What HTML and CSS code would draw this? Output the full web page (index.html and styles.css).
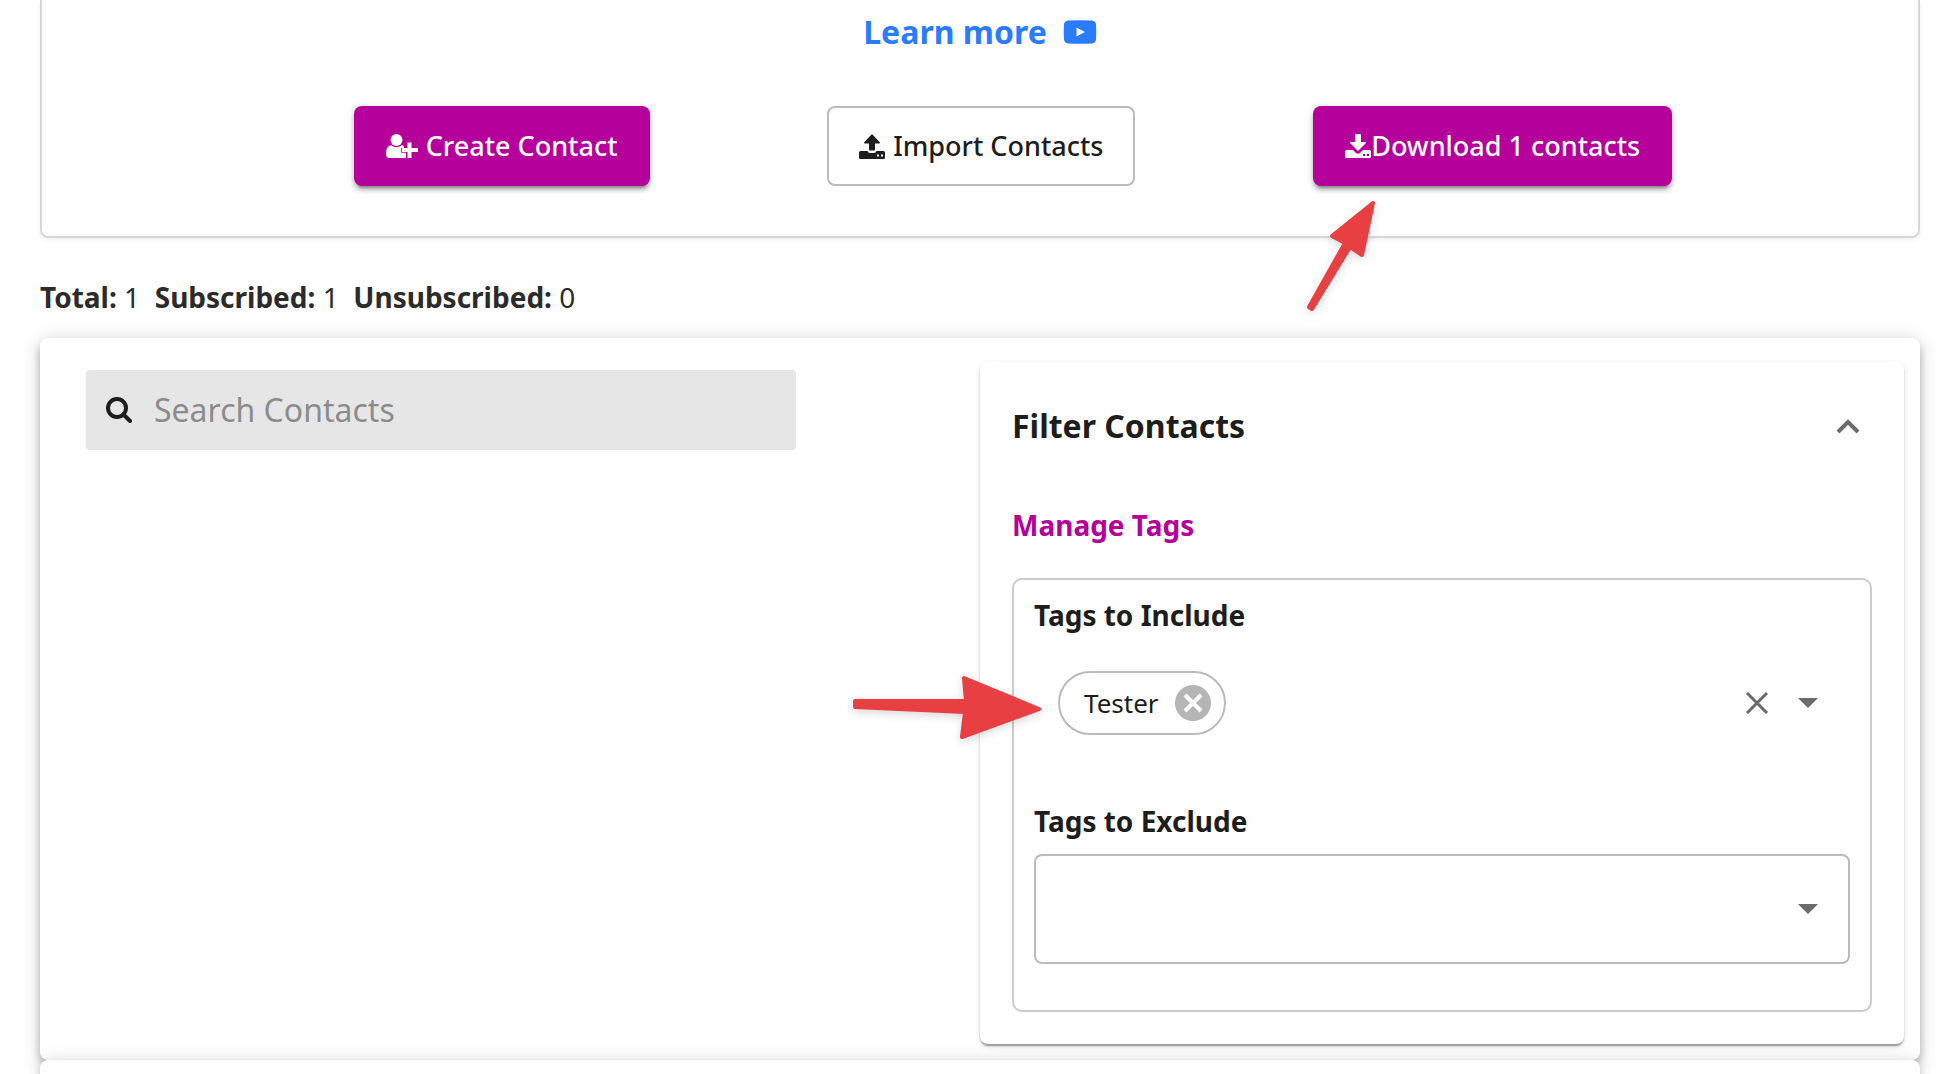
FILE: index.html
```html
<!DOCTYPE html>
<html lang="en">
<head>
    <meta charset="UTF-8">
    <meta name="viewport" content="width=device-width, initial-scale=1.0">
    <title>Contacts</title>
    <link rel="stylesheet" href="styles.css">
</head>
<body>

<section class="intro">
    <a class="learn-more" href="#">
        Learn more
        <svg class="icon-video" viewBox="0 0 34 24" aria-hidden="true">
            <path fill="currentColor" fill-rule="evenodd" d="M5 .6Q17 0 29 .6Q32.600 1 33 4.500Q33.600 12 33 19.500Q32.600 23 29 23.400Q17 24 5 23.400Q1.400 23 1 19.500Q.4 12 1 4.500Q1.400 1 5 .6ZM13.500 7.500V16.500L22 12Z"/>
        </svg>
    </a>
    <div class="actions">
        <button class="btn btn-primary" type="button">
            <svg class="icon-user" viewBox="0 0 32 24" aria-hidden="true">
                <ellipse cx="10.500" cy="6" rx="6" ry="6" fill="currentColor"/>
                <path fill="currentColor" d="M5.200 11.200Q10.500 15.400 15.800 11.200Q17 11.300 18 12.300V14H15.200V18.800H20V23.500Q19.500 24 18 24H3.500Q0 24 0 20Q0 11.500 5.200 11.200Z"/>
                <path fill="currentColor" d="M21.500 8.500H25.500V14H32V18H25.500V24H21.500V18H16V14H21.500Z"/>
            </svg>
            Create Contact
        </button>
        <button class="btn btn-outline" type="button">
            <svg class="icon-tray" viewBox="0 0 26 25" aria-hidden="true">
                <path fill="currentColor" d="M13 0L21 8.500Q21.300 9.500 20 9.500H16V15.500Q16 16.500 15 16.500H11Q10 16.500 10 15.500V9.500H6Q4.700 9.500 5 8.500Z"/>
                <path fill="currentColor" fill-rule="evenodd" d="M1.500 17H8.500Q9 19 11 19H15Q17 19 17.500 17H24.500Q26 17 26 18.500V23.500Q26 25 24.500 25H1.500Q0 25 0 23.500V18.500Q0 17 1.500 17ZM18 20.500V22.500H20V20.500ZM22 20.500V22.500H24V20.500Z"/>
            </svg>
            Import Contacts
        </button>
        <div class="download">
            <button class="btn btn-primary btn-tight" type="button">
                <svg class="icon-tray" viewBox="0 0 26 25" aria-hidden="true">
                    <path fill="currentColor" d="M11 0H15Q16 0 16 1V8H20Q21.300 8 21 9L13 17L5 9Q4.700 8 6 8H10V1Q10 0 11 0Z"/>
                    <path fill="currentColor" fill-rule="evenodd" d="M1.500 16H8L11 19Q13 20.500 15 19L18 16H24.500Q26 16 26 17.500V22.500Q26 24 24.500 24H1.500Q0 24 0 22.500V17.500Q0 16 1.500 16ZM18 20V22H20V20ZM22 20V22H24V20Z"/>
                </svg>
                Download 1 contacts
            </button>
            <svg class="pointer pointer-up" viewBox="0 0 80 120" aria-hidden="true">
                <path d="M72 4L31 37L44 44L8 108L11 110L49 48L61 56Z"/>
            </svg>
        </div>
    </div>
</section>

<p class="totals"><b>Total:</b> 1&nbsp; <b>Subscribed:</b> 1&nbsp; <b>Unsubscribed:</b> 0</p>

<section class="panel contacts">
    <div class="search-col">
        <div class="search">
            <svg class="icon-search" viewBox="0 0 26 26" aria-hidden="true">
                <circle cx="11" cy="11" r="9" fill="none" stroke="currentColor" stroke-width="4"/>
                <path d="M17.500 17.500L24 24" stroke="currentColor" stroke-width="4" stroke-linecap="round"/>
            </svg>
            <input type="text" placeholder="Search Contacts" aria-label="Search Contacts">
        </div>
    </div>

    <div class="filter">
        <button class="filter-head" type="button" aria-expanded="true">
            Filter Contacts
            <svg class="icon-chevron" viewBox="0 0 24 16" aria-hidden="true">
                <path d="M2 14L12 4L22 14" fill="none" stroke="currentColor" stroke-width="4"/>
            </svg>
        </button>
        <div class="filter-body">
            <a class="manage" href="#">Manage Tags</a>
            <div class="tags">
                <label for="include">Tags to Include</label>
                <div class="field">
                    <div class="chip">
                        Tester
                        <button class="chip-remove" type="button" aria-label="Remove Tester">
                            <svg viewBox="0 0 36 36" aria-hidden="true">
                                <circle cx="18" cy="18" r="18" fill="#b5b5b5"/>
                                <path d="M10 10L26 26M26 10L10 26" stroke="#fff" stroke-width="4"/>
                            </svg>
                        </button>
                        <svg class="pointer pointer-right" viewBox="0 0 200 80" aria-hidden="true">
                            <path d="M8 33L119 33L117 10L192 41L115 69L118 44L8 39Z"/>
                        </svg>
                    </div>
                    <input id="include" type="text">
                    <button class="icon-btn" type="button" aria-label="Clear">
                        <svg class="icon-clear" viewBox="0 0 22 22" aria-hidden="true">
                            <path d="M1 1L21 21M21 1L1 21" stroke="currentColor" stroke-width="3"/>
                        </svg>
                    </button>
                    <button class="icon-btn" type="button" aria-label="Open">
                        <svg class="icon-caret" viewBox="0 0 20 10" aria-hidden="true">
                            <path d="M0 0H20L10 10Z" fill="currentColor"/>
                        </svg>
                    </button>
                </div>
                <label for="exclude">Tags to Exclude</label>
                <div class="field field-outlined">
                    <select id="exclude">
                        <option></option>
                    </select>
                    <svg class="icon-caret" viewBox="0 0 20 10" aria-hidden="true">
                        <path d="M0 0H20L10 10Z" fill="currentColor"/>
                    </svg>
                </div>
            </div>
        </div>
    </div>
</section>

<section class="panel next"></section>

</body>
</html>
```

FILE: styles.css
```css
* {
    box-sizing: border-box;
}

body {
    margin: 0;
    padding: 0 34px 0 40px;
    min-height: 100vh;
    display: flex;
    flex-direction: column;
    background: #fff;
    color: #1d1d1d;
    font-family: "Noto Sans", "Open Sans", sans-serif;
    font-size: 28px;
    line-height: 38px;
}

button,
input,
select {
    font: inherit;
    color: inherit;
    background: none;
    border: 0;
    padding: 0;
    margin: 0;
}

a {
    text-decoration: none;
}

svg {
    display: block;
    flex: none;
}

/* Top card */
.intro {
    display: flex;
    flex-direction: column;
    padding: 10px 68px 50px 134px;
    border: 2px solid #d7d7d7;
    border-top: 0;
    border-radius: 0 0 8px 8px;
    box-shadow: 0 2px 4px rgba(0, 0, 0, 0.06);
}

.learn-more {
    display: flex;
    align-items: center;
    align-self: center;
    gap: 16px;
    margin: 0 66px 52px 0;
    color: #2b7bff;
    font-size: 32px;
    font-weight: 700;
    line-height: 44px;
}

.icon-video {
    width: 34px;
    height: 24px;
}

.actions {
    display: flex;
    justify-content: space-evenly;
}

.btn {
    display: flex;
    align-items: center;
    gap: 8px;
    height: 80px;
    padding: 0 32px;
    border-radius: 8px;
    font-size: 27px;
    font-weight: 500;
}

.btn-primary {
    background: #b6009b;
    color: #fff;
    box-shadow: 0 6px 2px -4px rgba(0, 0, 0, 0.2), 0 4px 4px rgba(0, 0, 0, 0.24), 0 2px 10px rgba(0, 0, 0, 0.12);
}

.btn-outline {
    padding: 0 30px;
    border: 2px solid #bbb;
}

.btn-tight {
    gap: 0;
}

.icon-user {
    width: 32px;
    height: 24px;
}

.icon-tray {
    width: 26px;
    height: 25px;
}

.download {
    position: relative;
}

/* Red pointers drawn over the page */
.pointer {
    position: absolute;
    fill: #e73f42;
    stroke: #e73f42;
    stroke-width: 4px;
    stroke-linejoin: round;
    filter: drop-shadow(0 3px 4px rgba(0, 0, 0, 0.15));
    pointer-events: none;
}

.pointer-up {
    top: 93px;
    left: -12px;
    width: 80px;
    height: 120px;
}

.pointer-right {
    top: -5px;
    right: 177px;
    width: 200px;
    height: 80px;
}

.totals {
    margin: 40px 0 22px;
    color: #2b2b2b;
}

/* Contacts panel */
.panel {
    border-radius: 8px;
    background: #fff;
    box-shadow: 0 4px 8px -2px rgba(0, 0, 0, 0.2), 0 8px 10px rgba(0, 0, 0, 0.14), 0 2px 20px rgba(0, 0, 0, 0.16);
}

.contacts {
    display: grid;
    grid-template-columns: 1fr 1fr;
    padding: 24px 0 16px;
}

.next {
    flex: 1;
    border-radius: 8px 8px 0 0;
}

.search-col {
    padding: 8px 184px 0 46px;
}

.search {
    display: flex;
    align-items: center;
    gap: 22px;
    height: 80px;
    padding: 0 20px;
    border-radius: 4px;
    background: #e6e6e6;
}

.search input {
    flex: 1;
    min-width: 0;
    font-size: 32px;
    line-height: 44px;
}

.search input::placeholder {
    color: #8c8c8c;
    opacity: 1;
}

.icon-search {
    width: 26px;
    height: 26px;
}

.filter {
    margin-right: 16px;
    border-radius: 8px;
    box-shadow: 0 4px 2px -2px rgba(0, 0, 0, 0.2), 0 2px 2px rgba(0, 0, 0, 0.2), 0 2px 6px rgba(0, 0, 0, 0.12);
}

.filter-head {
    display: flex;
    align-items: center;
    justify-content: space-between;
    width: 100%;
    height: 128px;
    padding: 0 44px 0 32px;
    font-size: 32px;
    font-weight: 700;
    line-height: 44px;
}

.icon-chevron {
    width: 24px;
    height: 16px;
    color: #6b6b6b;
}

.filter-body {
    padding: 16px 32px 32px;
}

.manage {
    display: block;
    margin-bottom: 34px;
    color: #b6009b;
    font-weight: 700;
}

.tags {
    padding: 16px 20px 46px;
    border: 2px solid #ccc;
    border-radius: 10px;
}

.tags label {
    display: block;
    margin-bottom: 14px;
    font-weight: 700;
}

.field {
    display: flex;
    align-items: center;
    height: 110px;
    padding: 0 22px 0 24px;
    color: #6b6b6b;
}

.field + label {
    margin-top: 44px;
}

.field input {
    flex: 1;
    min-width: 0;
}

.field-outlined {
    padding: 0 30px 0 24px;
    border: 2px solid #bbb;
    border-radius: 8px;
}

.field-outlined select {
    flex: 1;
    height: 100%;
    appearance: none;
}

.chip {
    position: relative;
    display: flex;
    align-items: center;
    gap: 16px;
    height: 64px;
    padding: 0 13px 0 24px;
    border: 2px solid #bbb;
    border-radius: 32px;
    color: #1d1d1d;
    font-size: 26px;
}

.chip-remove,
.chip-remove svg {
    width: 36px;
    height: 36px;
}

.icon-btn {
    padding: 10px;
}

.icon-btn + .icon-btn {
    margin-left: 10px;
}

.icon-clear {
    width: 22px;
    height: 22px;
}

.icon-caret {
    width: 20px;
    height: 10px;
}
```
